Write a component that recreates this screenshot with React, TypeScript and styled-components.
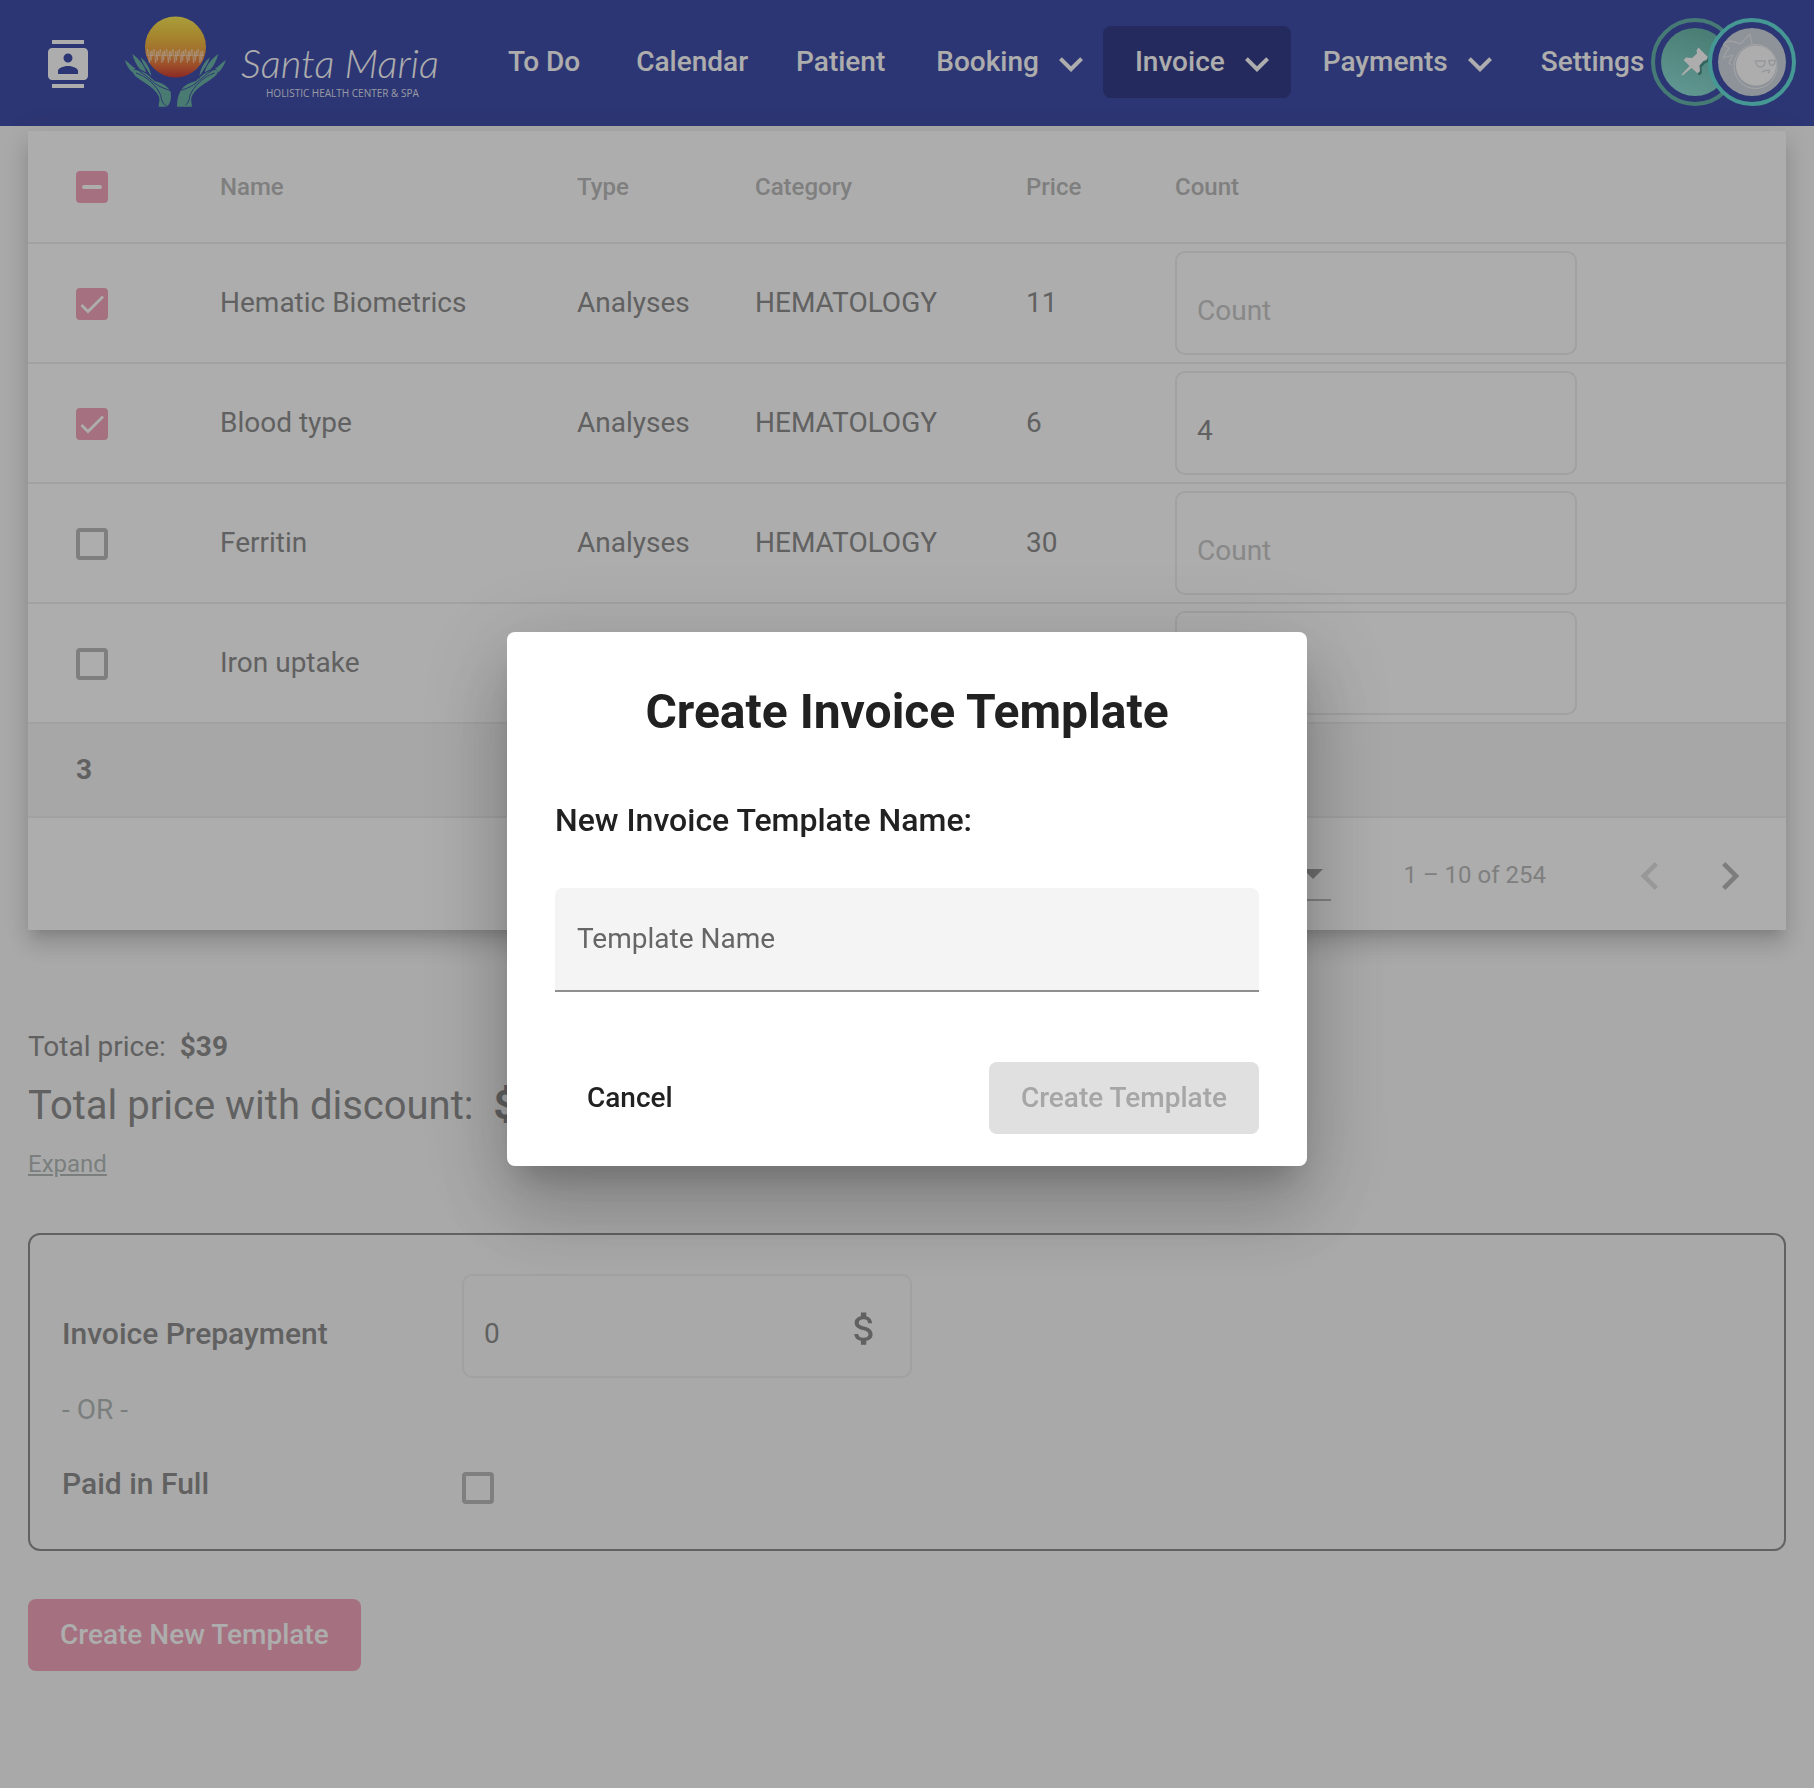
import React, { useEffect, useRef } from 'react';
import styled, { createGlobalStyle } from 'styled-components';

const color = {
  nav: '#4250ab',
  navActive: '#353e89',
  page: '#fafafa',
  surface: '#ffffff',
  pink: '#f4a5bb',
  text: '#8f8f8f',
  muted: '#bcbcbc',
  hint: '#c9c9c9',
  teal: '#b4bcba',
  line: '#ededed',
};

const GlobalStyle = createGlobalStyle`
  *, *::before, *::after { box-sizing: border-box; }
  body {
    margin: 0;
    background: ${color.page};
    font-family: Roboto, "Liberation Sans", sans-serif;
    font-size: 28px;
    line-height: 36px;
    color: ${color.text};
  }
  button, input, select { font: inherit; color: inherit; }
`;

const Page = styled.div`
  min-height: 100vh;
`;

/* ---------- Navigation ---------- */

const NavBar = styled.header`
  display: flex;
  align-items: center;
  height: 126px;
  padding: 0 18px 2px 44px;
  background: ${color.nav};
  color: #fff;
`;

const IconButton = styled.button`
  display: flex;
  align-items: center;
  justify-content: center;
  padding: 0;
  border: 0;
  background: none;
`;

const ContactsButton = styled(IconButton)`
  padding-top: 4px;
`;

const LogoLink = styled.a`
  display: flex;
  margin-left: 32px;
`;

const NavMenu = styled.nav`
  display: flex;
  flex: 1;
  padding-left: 28px;
`;

const NavItem = styled.a<{ $start: number; $end: number; $active?: boolean }>`
  display: flex;
  align-items: center;
  height: 72px;
  padding: 0 ${(p) => p.$end}px 0 ${(p) => p.$start}px;
  border-radius: 8px;
  background: ${(p) => (p.$active ? color.navActive : 'transparent')};
  color: inherit;
  font-weight: 500;
  text-decoration: none;
  white-space: nowrap;

  svg {
    margin: 4px 0 0 8px;
  }
`;

const Avatars = styled.div`
  display: flex;
`;

const AvatarRing = styled.button<{ $ring: string; $fill: string }>`
  display: flex;
  align-items: center;
  justify-content: center;
  width: 88px;
  height: 88px;
  padding: 0;
  border: 4px solid ${(p) => p.$ring};
  border-radius: 50%;
  background: ${color.nav};

  & + & {
    margin-left: -31px;
  }

  svg {
    border-radius: 50%;
    background: ${(p) => p.$fill};
  }
`;

/* ---------- Table ---------- */

const Main = styled.main`
  display: flex;
  flex-direction: column;
  padding: 5px 28px 0;
`;

const TableCard = styled.section`
  background: ${color.surface};
  box-shadow: 0 10px 10px -6px rgba(0, 0, 0, 0.12),
    0 16px 20px 2px rgba(0, 0, 0, 0.09), 0 6px 28px 4px rgba(0, 0, 0, 0.08);
`;

const Table = styled.table`
  width: 100%;
  table-layout: fixed;
  border-collapse: separate;
  border-spacing: 0;
`;

const Col = styled.col<{ $width?: number }>`
  width: ${(p) => (p.$width ? `${p.$width}px` : 'auto')};
`;

const HeadCell = styled.th`
  height: 113px;
  padding: 0;
  border-bottom: 2px solid ${color.line};
  color: ${color.muted};
  font-size: 24px;
  font-weight: 500;
  text-align: left;

  &:first-child {
    padding-left: 48px;
  }
`;

const Cell = styled.td`
  height: 120px;
  padding: 0;
  border-bottom: 2px solid ${color.line};

  &:first-child {
    padding-left: 48px;
  }
`;

const FootCell = styled(Cell)`
  height: 94px;
  background: #f7f7f7;
  font-weight: 700;
`;

const CheckWrap = styled.span`
  display: grid;
  width: 32px;
  height: 32px;

  td & {
    margin-top: 2px;
  }

  & > * {
    grid-area: 1 / 1;
    pointer-events: none;
  }
`;

const CheckInput = styled.input`
  appearance: none;
  width: 32px;
  height: 32px;
  margin: 0;
  border: 4px solid #bbb;
  border-radius: 4px;
  pointer-events: auto;

  &:checked,
  &:indeterminate {
    border-color: ${color.pink};
    background: ${color.pink};
  }
`;

const Field = styled.div<{ $width: number }>`
  display: flex;
  align-items: center;
  width: ${(p) => p.$width}px;
  height: 104px;
  padding: 0 20px;
  border: 2px solid ${color.line};
  border-radius: 10px;
`;

const FieldInput = styled.input`
  flex: 1;
  min-width: 0;
  height: 100%;
  padding: 14px 0 0;
  border: 0;
  outline: 0;
  background: none;

  &::placeholder {
    color: ${color.hint};
    opacity: 1;
  }
`;

const Paginator = styled.div`
  display: flex;
  align-items: center;
  justify-content: flex-end;
  height: 112px;
  padding: 2px 16px 0 0;
  color: ${color.muted};
  font-size: 24px;
`;

const PageSize = styled.label`
  display: flex;
  align-items: center;
  gap: 8px;
`;

const SizeBox = styled.span`
  display: flex;
  align-items: center;
  width: 112px;
  height: 52px;
  border-bottom: 2px solid ${color.muted};
`;

const SizeSelect = styled.select`
  appearance: none;
  flex: 1;
  min-width: 0;
  padding: 0;
  border: 0;
  background: none;
`;

const SizeArrow = styled.span`
  margin-right: 8px;
  border: 10px solid transparent;
  border-bottom-width: 0;
  border-top-color: #a3a3a3;
`;

const Range = styled.span`
  margin: 0 64px 0 72px;
`;

const PageButton = styled(IconButton)`
  width: 80px;
  height: 80px;
  padding-top: 2px;
  color: #b9b9b9;

  &:disabled {
    color: #e0e0e0;
  }
`;

/* ---------- Totals and payment ---------- */

const Totals = styled.section`
  display: flex;
  flex-direction: column;
  align-items: flex-start;
  padding-top: 99px;
`;

const TotalLine = styled.p`
  margin: 0;
`;

const DiscountLine = styled.p`
  margin: 9px 0 8px;
  font-size: 40px;
  line-height: 64px;
`;

const Amount = styled.strong<{ $gap: number }>`
  margin-left: ${(p) => p.$gap}px;
  font-weight: 700;
`;

const ExpandLink = styled.a`
  color: ${color.teal};
  font-size: 24px;
`;

const PaymentBox = styled.section`
  display: grid;
  grid-template-columns: 400px 1fr;
  align-items: center;
  margin-top: 51px;
  padding: 39px 32px 27px;
  border: 2px solid #919191;
  border-radius: 12px;
`;

const PaymentLabel = styled.label`
  padding-top: 16px;
  font-size: 30px;
  font-weight: 500;
`;

const OrText = styled.span`
  grid-column: 1 / -1;
  padding: 14px 0 26px;
  color: ${color.teal};
`;

const PaidLabel = styled(PaymentLabel)`
  padding: 0 0 8px;
  line-height: 60px;
`;

const FieldSuffix = styled.span`
  display: flex;
  padding: 4px 4px 0 0;
`;

/* ---------- Buttons ---------- */

const Button = styled.button<{ $fill?: string; $ink: string }>`
  height: 72px;
  padding: 0 32px;
  border: 0;
  border-radius: 8px;
  background: ${(p) => p.$fill ?? 'transparent'};
  color: ${(p) => p.$ink};
  font-weight: 500;
`;

const PageActions = styled.div`
  padding: 48px 0;
`;

/* ---------- Dialog ---------- */

const Backdrop = styled.div`
  position: fixed;
  inset: 0;
  display: flex;
  align-items: center;
  justify-content: center;
  padding-top: 9px;
  background: rgba(0, 0, 0, 0.32);
`;

const Dialog = styled.div`
  width: 800px;
  padding: 48px 48px 32px;
  border-radius: 8px;
  background: #fff;
  color: #212121;
  box-shadow: 0 22px 30px -14px rgba(0, 0, 0, 0.2),
    0 48px 76px 6px rgba(0, 0, 0, 0.14), 0 18px 92px 16px rgba(0, 0, 0, 0.12);
`;

const DialogTitle = styled.h1`
  margin: 0;
  font-size: 48px;
  font-weight: 700;
  line-height: 64px;
  text-align: center;
`;

const DialogLabel = styled.label`
  display: block;
  margin: 56px 0 48px;
  font-size: 32px;
  font-weight: 500;
  line-height: 40px;
`;

const DialogInput = styled.input`
  display: block;
  width: 100%;
  height: 104px;
  padding: 0 22px;
  border: 0;
  border-bottom: 2px solid #8f8f8f;
  border-radius: 8px 8px 0 0;
  outline: 0;
  background: #f4f4f4;

  &::placeholder {
    color: #666;
    opacity: 1;
  }
`;

const DialogActions = styled.div`
  display: flex;
  justify-content: space-between;
  margin-top: 70px;
`;

/* ---------- Drawings ---------- */

const ContactsIcon = () => (
  <svg width="48" height="48" viewBox="0 0 24 24" fill="currentColor" aria-hidden="true">
    <path d="M20 0H4v2h16V0zM4 24h16v-2H4v2zM20 4H4c-1.1 0-2 .9-2 2v12c0 1.1.9 2 2 2h16c1.1 0 2-.9 2-2V6c0-1.100-.9-2-2-2zm-8 2.750c1.240 0 2.250 1.010 2.250 2.250s-1.010 2.250-2.250 2.250S9.750 10.240 9.750 9 10.760 6.750 12 6.750zM17 17H7v-1.500c0-1.670 3.330-2.500 5-2.500s5 .830 5 2.500V17z" />
  </svg>
);

const ChevronDown = () => (
  <svg width="48" height="48" viewBox="0 0 24 24" fill="currentColor" aria-hidden="true">
    <path d="M16.59 8.59L12 13.17 7.41 8.59 6 10l6 6 6-6z" />
  </svg>
);

const PageChevron = ({ d }: { d: string }) => (
  <svg width="56" height="56" viewBox="0 0 24 24" fill="currentColor" aria-hidden="true">
    <path d={d} />
  </svg>
);

const MoneyIcon = () => (
  <svg width="43" height="43" viewBox="0 0 24 24" fill="currentColor" aria-hidden="true">
    <path d="M11.8 10.9c-2.270-.590-3-1.200-3-2.150 0-1.090 1.010-1.850 2.700-1.850 1.780 0 2.440.850 2.500 2.100h2.210c-.070-1.720-1.120-3.300-3.210-3.810V3h-3v2.160c-1.940.420-3.500 1.680-3.500 3.610 0 2.310 1.910 3.460 4.700 4.130 2.500.6 3 1.480 3 2.410 0 .690-.490 1.790-2.700 1.790-2.060 0-2.870-.920-2.980-2.100h-2.200c.120 2.190 1.760 3.420 3.680 3.830V21h3v-2.150c1.950-.370 3.500-1.500 3.500-3.550 0-2.840-2.430-3.810-4.700-4.400z" />
  </svg>
);

const Hand = () => (
  <>
    <g fill="#6db5a9">
      <path d="M26 156C32 172 38 184 50 194C50 187 53 183 60 183C48 176 38 163 26 156Z" />
      <path d="M49 138C54 156 62 173 72 184L90 193C86 172 68 152 49 138Z" />
      <path d="M74 148C78 164 92 186 106 205C103 182 90 160 74 148Z" />
      <path d="M52 185C48 194 56 204 66 210C90 228 116 240 128 264C133 276 128 286 128 296H150C163 292 167 270 164 252C160 240 136 234 118 222C104 204 82 186 52 185Z" />
      <path d="M112 219C128 220 152 232 160 245C144 243 126 236 112 219Z" />
    </g>
    <g fill="none" stroke={color.nav} strokeWidth="3">
      <path d="M60 195C92 204 124 236 134 262C136 278 142 290 152 294" />
      <path d="M66 186C82 196 96 208 110 220C126 236 146 242 162 247" />
      <path d="M88 180C94 192 100 202 108 212" />
    </g>
  </>
);

const wave = Array.from({ length: 9 }, (_, i) => {
  const x = 92 + i * 19;
  return `L${x} 143L${x + 3} 123L${x + 5} 138L${x + 8} 165L${x + 11} 130L${x + 13} 158L${x + 16} 128L${x + 17} 143`;
}).join('');

const Logo = () => (
  <svg width="324" height="100" viewBox="124 12 324 100" role="img" aria-label="Santa Maria">
    <defs>
      <linearGradient id="sun" x1="0" y1="0" x2="0" y2="1">
        <stop offset="0" stopColor="#fbe957" />
        <stop offset="0.3" stopColor="#f4c846" />
        <stop offset="0.6" stopColor="#f0a043" />
        <stop offset="0.8" stopColor="#e6733d" />
        <stop offset="1" stopColor="#cf3d38" />
      </linearGradient>
    </defs>
    <circle cx="175.500" cy="47" r="30.500" fill="url(#sun)" />
    <g transform="translate(116 8) scale(0.3333)">
      <path d={`M92 143${wave}L264 143`} fill="none" stroke="#fff" strokeOpacity="0.6" strokeWidth="2" />
      <path d="M92 142H264" stroke="#fff" strokeOpacity="0.5" strokeWidth="2" />
      <Hand />
      <g transform="translate(356 0) scale(-1 1)">
        <Hand />
        <path d="M146 296C150 284 158 270 158 258L165 254C172 270 173 284 173 296Z" fill="#6db5a9" />
      </g>
    </g>
    <text x="241" y="78" fill="#fff" fontFamily="Lato, sans-serif" fontSize="40" fontStyle="italic" fontWeight="300">
      Santa Maria
    </text>
    <text x="266" y="97" fill="#fff" fillOpacity="0.85" fontFamily="Open Sans, sans-serif" fontSize="10">
      HOLISTIC HEALTH CENTER &amp; SPA
    </text>
  </svg>
);

const PinDrawing = () => (
  <svg width="68" height="68" viewBox="0 0 68 68" aria-hidden="true">
    <g fill="#2d6f68" fillOpacity="0.6" transform="translate(2 2)">
      <path d="M37.500 19.500L47 29L45.500 32L42.500 33L38.500 37.500L39 43L36.500 45.500L22.500 32L25 29.500L31 30L36 25.500Z" />
    </g>
    <path
      d="M37.500 19.500L47 29L45.500 32L42.500 33L38.500 37.500L39 43L36.500 45.500L30.500 40L21.500 47.500L20.500 46.500L28.500 38L22.500 32L25 29.500L31 30L36 25.500L35.500 22.500Z"
      fill="#fff"
    />
  </svg>
);

const FaceDrawing = () => (
  <svg width="68" height="68" viewBox="0 0 68 68" aria-hidden="true">
    <ellipse cx="37.500" cy="38.500" rx="21.500" ry="22" fill="none" stroke="#f2f4f6" strokeWidth="1" />
    <ellipse cx="38" cy="37.500" rx="20" ry="20" fill="#fff" />
    <g fill="none" stroke="#e9ecef" strokeWidth="1.300" strokeLinejoin="round">
      <path d="M14 37L11 35L15 27L5 30L11 20L4 15Q14 11 22 16L32 6L34 16" />
    </g>
    <g fill="none" stroke="#dcdfe3" strokeWidth="1.400" strokeLinecap="round">
      <path d="M37.500 33H47Q47 39 42.500 39Q38.500 39 37.500 33Z" />
      <path d="M51 32.500H57.500Q56 38 53.500 37.500Q51 36.500 51 32.500Z" />
      <path d="M44 44Q48 41.500 51.500 42.500L50.500 45" />
    </g>
  </svg>
);

/* ---------- Parts ---------- */

type CheckBoxProps = { id?: string; label?: string; checked?: boolean; mixed?: boolean };

const CheckBox = ({ id, label, checked, mixed }: CheckBoxProps) => {
  const ref = useRef<HTMLInputElement>(null);
  useEffect(() => {
    if (ref.current) ref.current.indeterminate = Boolean(mixed);
  }, [mixed]);
  return (
    <CheckWrap>
      <CheckInput ref={ref} id={id} type="checkbox" aria-label={label} defaultChecked={checked} />
      {(checked || mixed) && (
        <svg width="32" height="32" viewBox="0 0 24 24" fill="none" stroke="#fff" aria-hidden="true">
          {mixed ? (
            <path d="M6 12H18" strokeWidth="3" strokeLinecap="round" />
          ) : (
            <path d="M4.100 12.700L9 17.600L20.300 6.300" strokeWidth="2.130" />
          )}
        </svg>
      )}
    </CheckWrap>
  );
};

const navItems = [
  { label: 'To Do', start: 32, end: 32 },
  { label: 'Calendar', start: 24, end: 24 },
  { label: 'Patient', start: 24, end: 24 },
  { label: 'Booking', start: 27, end: 8, menu: true },
  { label: 'Invoice', start: 32, end: 10, menu: true, active: true },
  { label: 'Payments', start: 32, end: 10, menu: true },
  { label: 'Settings', start: 27, end: 0 },
];

const services = [
  { name: 'Hematic Biometrics', type: 'Analyses', category: 'HEMATOLOGY', price: 11, checked: true, count: '' },
  { name: 'Blood type', type: 'Analyses', category: 'HEMATOLOGY', price: 6, checked: true, count: '4' },
  { name: 'Ferritin', type: 'Analyses', category: 'HEMATOLOGY', price: 30, checked: false, count: '' },
  { name: 'Iron uptake', type: 'Analyses', category: 'HEMATOLOGY', price: 10, checked: false, count: '' },
];

const columns = ['Name', 'Type', 'Category', 'Price', 'Count'];
const columnWidths = [192, 357, 178, 271, 149, undefined];

export default function App() {
  return (
    <Page>
      <GlobalStyle />
      <NavBar>
        <ContactsButton aria-label="Contacts">
          <ContactsIcon />
        </ContactsButton>
        <LogoLink href="#home">
          <Logo />
        </LogoLink>
        <NavMenu>
          {navItems.map((item) => (
            <NavItem key={item.label} href="#menu" $start={item.start} $end={item.end} $active={item.active}>
              {item.label}
              {item.menu && <ChevronDown />}
            </NavItem>
          ))}
        </NavMenu>
        <Avatars>
          <AvatarRing aria-label="Pinned" $ring="#67b6ad" $fill="linear-gradient(20deg, #93e3dc, #67b4a5)">
            <PinDrawing />
          </AvatarRing>
          <AvatarRing aria-label="Profile" $ring="#66e0d9" $fill="#d2d9e2">
            <FaceDrawing />
          </AvatarRing>
        </Avatars>
      </NavBar>

      <Main>
        <TableCard>
          <Table>
            <colgroup>
              {columnWidths.map((width, i) => (
                <Col key={i} $width={width} />
              ))}
            </colgroup>
            <thead>
              <tr>
                <HeadCell>
                  <CheckBox label="Select all" mixed />
                </HeadCell>
                {columns.map((name) => (
                  <HeadCell key={name}>{name}</HeadCell>
                ))}
              </tr>
            </thead>
            <tbody>
              {services.map((row) => (
                <tr key={row.name}>
                  <Cell>
                    <CheckBox label={`Select ${row.name}`} checked={row.checked} />
                  </Cell>
                  <Cell>{row.name}</Cell>
                  <Cell>{row.type}</Cell>
                  <Cell>{row.category}</Cell>
                  <Cell>{row.price}</Cell>
                  <Cell>
                    <Field $width={402}>
                      <FieldInput aria-label={`Count of ${row.name}`} placeholder="Count" defaultValue={row.count} />
                    </Field>
                  </Cell>
                </tr>
              ))}
            </tbody>
            <tfoot>
              <tr>
                <FootCell>3</FootCell>
                <FootCell colSpan={5} />
              </tr>
            </tfoot>
          </Table>
          <Paginator>
            <PageSize>
              Items per page:
              <SizeBox>
                <SizeSelect defaultValue="10">
                  <option>10</option>
                  <option>25</option>
                </SizeSelect>
                <SizeArrow />
              </SizeBox>
            </PageSize>
            <Range>1 – 10 of 254</Range>
            <PageButton aria-label="Previous page" disabled>
              <PageChevron d="M15.41 7.41L14 6l-6 6 6 6 1.410-1.410L10.830 12z" />
            </PageButton>
            <PageButton aria-label="Next page">
              <PageChevron d="M10 6L8.590 7.410 13.170 12l-4.580 4.590L10 18l6-6z" />
            </PageButton>
          </Paginator>
        </TableCard>

        <Totals>
          <TotalLine>
            Total price:<Amount $gap={14}>$39</Amount>
          </TotalLine>
          <DiscountLine>
            Total price with discount:<Amount $gap={20}>$39</Amount>
          </DiscountLine>
          <ExpandLink href="#expand">Expand</ExpandLink>
        </Totals>

        <PaymentBox>
          <PaymentLabel htmlFor="prepayment">Invoice Prepayment</PaymentLabel>
          <Field $width={450}>
            <FieldInput id="prepayment" defaultValue="0" />
            <FieldSuffix>
              <MoneyIcon />
            </FieldSuffix>
          </Field>
          <OrText>- OR -</OrText>
          <PaidLabel htmlFor="paid">Paid in Full</PaidLabel>
          <CheckBox id="paid" />
        </PaymentBox>

        <PageActions>
          <Button $fill={color.pink} $ink="#fff">
            Create New Template
          </Button>
        </PageActions>
      </Main>

      <Backdrop>
        <Dialog role="dialog" aria-modal="true" aria-labelledby="dialog-title">
          <DialogTitle id="dialog-title">Create Invoice Template</DialogTitle>
          <DialogLabel htmlFor="template-name">New Invoice Template Name:</DialogLabel>
          <DialogInput id="template-name" placeholder="Template Name" />
          <DialogActions>
            <Button $ink="#212121">Cancel</Button>
            <Button $fill="#e0e0e0" $ink="#a6a6a6" disabled>
              Create Template
            </Button>
          </DialogActions>
        </Dialog>
      </Backdrop>
    </Page>
  );
}
